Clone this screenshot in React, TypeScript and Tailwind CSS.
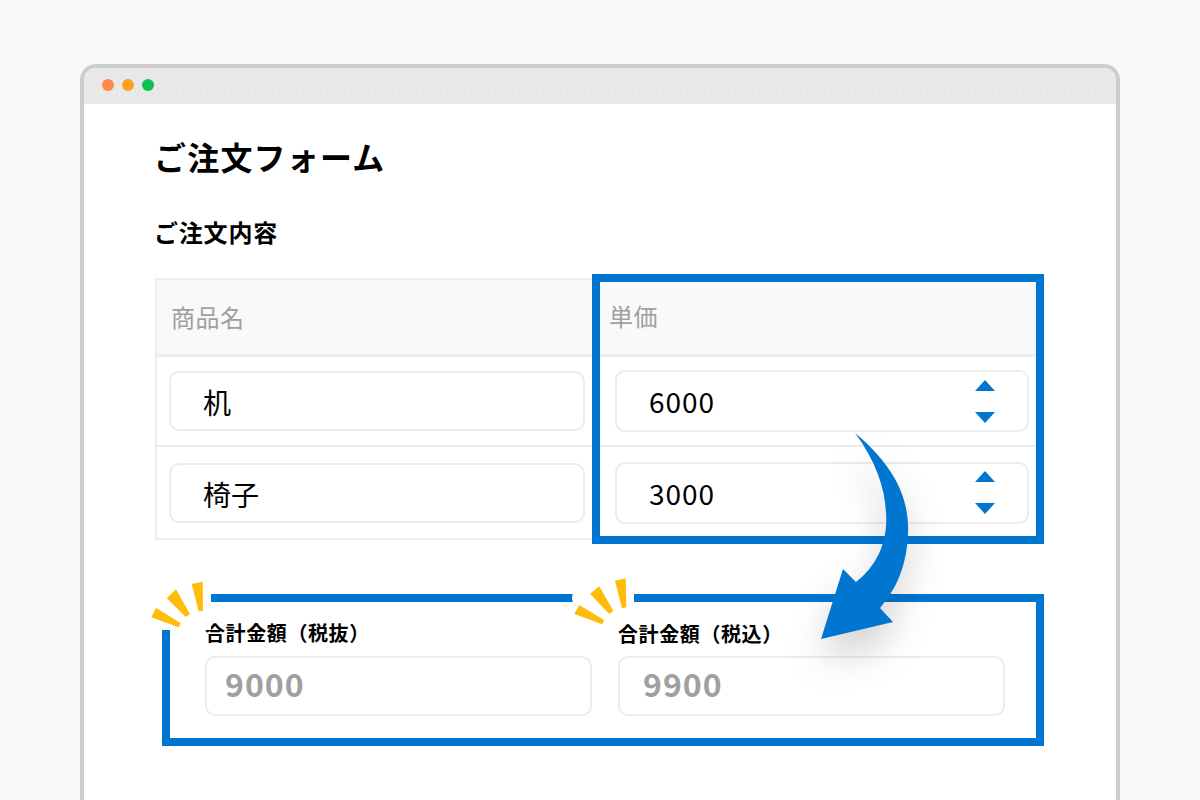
import React from "react";

const BLUE = "#0076d1";

function Spinner() {
  return (
    <div className="flex flex-col gap-[21px] mr-[32px]">
      <svg width="20" height="11" viewBox="0 0 20 11" fill={BLUE}>
        <polygon points="10,0 20,11 0,11" />
      </svg>
      <svg width="20" height="11" viewBox="0 0 20 11" fill={BLUE}>
        <polygon points="0,0 20,0 10,11" />
      </svg>
    </div>
  );
}

function NameCell({ value }: { value: string }) {
  return (
    <div className="w-[416px] h-[60px] ml-[12px] flex items-center pl-[32px] pt-[2px] bg-white border-2 border-[#ececec] rounded-[10px] text-[28px] text-black">
      {value}
    </div>
  );
}

function PriceCell({ value }: { value: string }) {
  return (
    <div className="w-[414px] h-[62px] ml-[15px] flex items-center justify-between pl-[32px] bg-white border-2 border-[#ececec] rounded-[10px] text-[28px] tracking-[1px] text-black">
      <span>{value}</span>
      <Spinner />
    </div>
  );
}

function Total({ label, value, textPad, labelPad }: { label: string; value: string; textPad: string; labelPad: string }) {
  return (
    <div className="w-[387px] shrink-0">
      <div className={`h-[37px] text-[20px] leading-[28px] font-bold tracking-[0.6px] text-black ${labelPad}`}>{label}</div>
      <div className={`h-[60px] flex items-center pb-[6px] border-2 border-[#ececec] rounded-[10px] text-[32px] font-bold tracking-[1px] text-[#a0a0a0] ${textPad}`}>
        {value}
      </div>
    </div>
  );
}

export default function App() {
  return (
    <div className="h-screen overflow-hidden bg-[#f9f9f9] pt-[64px] px-[80px] font-['Noto_Sans_CJK_JP','Noto_Sans',sans-serif]">
      <div className="h-[800px] bg-white border-x-4 border-t-4 border-[#cccccc] rounded-t-[16px] overflow-hidden">
        <div className="h-[36px] flex items-center gap-[8px] pl-[18px] pb-[2px] bg-[#e9e9e9] bg-[radial-gradient(#e0e0e0_0.6px,transparent_0.8px)] bg-[length:6px_6px]">
          <span className="w-[12px] h-[12px] rounded-full bg-[#ff8a4c]" />
          <span className="w-[12px] h-[12px] rounded-full bg-[#ffa01f]" />
          <span className="w-[12px] h-[12px] rounded-full bg-[#0dc04f]" />
        </div>

        <div className="relative pl-[71px] pt-[28px]">
          <h1 className="ml-[-1px] h-[48px] text-[32px] leading-[48px] font-bold tracking-[1.2px] text-black">ご注文フォーム</h1>
          <h2 className="ml-[-1px] mt-[34px] h-[36px] text-[24px] leading-[36px] font-bold tracking-[0.8px] text-black">ご注文内容</h2>

          <div className="relative mt-[28px] w-[883px] border-2 border-[#ececec]">
            <div className="grid grid-cols-[443px_436px] h-[74px] bg-[#f9f9f9] text-[24px] tracking-[0.5px] text-[#a0a0a0]">
              <div className="flex items-center pl-[14px]">商品名</div>
              <div className="flex items-center pl-[9px] pb-[2px]">単価</div>
            </div>
            <div className="grid grid-cols-[443px_436px] h-[91px] items-center border-t-[3px] border-[#ececec]">
              <NameCell value="机" />
              <PriceCell value="6000" />
            </div>
            <div className="grid grid-cols-[443px_436px] h-[93px] items-center border-t-2 border-[#ececec]">
              <NameCell value="椅子" />
              <PriceCell value="3000" />
            </div>
            <div className="absolute left-[435px] top-[-6px] w-[452px] h-[270px] border-8 border-[#0076d1]" />
          </div>

          <div className="relative mt-[54px] ml-[7px] w-[882px] h-[152px] border-8 border-[#0076d1]">
            <div className="absolute left-[-10px] top-[-12px] w-[51px] h-[40px] bg-white" />
            <div className="absolute left-[402px] top-[-12px] w-[62px] h-[16px] rounded-l-[10px] bg-white" />
            <svg className="absolute left-[-20px] top-[-24px]" width="70" height="60" viewBox="150 578 70 60" fill="#ffbc0a">
              <polygon points="151.3,617.3 156,607.7 180.7,623.3 178.7,627.3" />
              <polygon points="166.7,598.3 176,589.3 190,614 185.7,617" />
              <polygon points="191.7,584 202.7,581.7 203,610.7 198.7,611.3" />
            </svg>
            <svg className="absolute left-[402px] top-[-26px]" width="70" height="60" viewBox="572 576 70 60" fill="#ffbc0a">
              <polygon points="574.3,614 579.3,605 604,620 602.3,624.3" />
              <polygon points="590,594 599.3,586.3 613.3,610.7 609.3,614" />
              <polygon points="615,580.7 625.7,578.3 626.3,607.3 622,608.3" />
            </svg>
            <div className="flex gap-[26px] pl-[35px] pt-[17px]">
              <Total label="合計金額（税抜）" value="9000" textPad="pl-[18px]" labelPad="" />
              <Total label="合計金額（税込）" value="9900" textPad="pl-[23px]" labelPad="pt-[1px]" />
            </div>
          </div>

          {/* curved arrow from the unit price column down to the totals */}
          <svg
            className="absolute left-[732px] top-[324px] drop-shadow-[0_20px_18px_rgba(0,0,0,0.18)]"
            width="100"
            height="215"
            viewBox="816 428 100 215"
            fill="#0076d1"
          >
            <path d="M855 433 C890 462 910 495 908 533 C907 565 897 588 880 608 L893 622 L821 639 L843 569 L856 582 C878 565 888 540 886 513 C885 487 875 460 855 433 Z" />
          </svg>
        </div>
      </div>
    </div>
  );
}
